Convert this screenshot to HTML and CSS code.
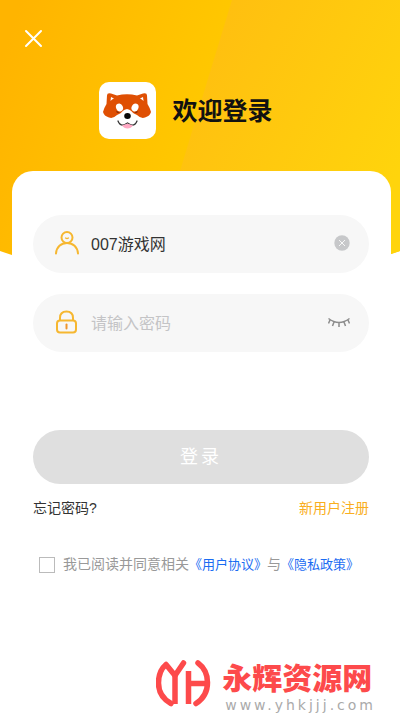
FILE: index.html
```html
<!DOCTYPE html>
<html lang="zh-CN">
<head>
<meta charset="utf-8">
<meta name="viewport" content="width=device-width, initial-scale=1">
<title>欢迎登录</title>
<link rel="stylesheet" href="styles.css">
</head>
<body>
<div class="page">
  <svg class="backdrop" viewBox="0 0 400 275" preserveAspectRatio="none" aria-hidden="true">
    <defs>
      <linearGradient id="left" gradientUnits="userSpaceOnUse" x1="0" y1="60" x2="230" y2="140">
        <stop offset="0" stop-color="#ffb400"/>
        <stop offset="1" stop-color="#ffcb00"/>
      </linearGradient>
      <linearGradient id="right" gradientUnits="userSpaceOnUse" x1="195" y1="60" x2="400" y2="170">
        <stop offset="0" stop-color="#ffbf10"/>
        <stop offset="1" stop-color="#ffd40c"/>
      </linearGradient>
    </defs>
    <path fill="url(#left)" d="M0 0H400V251Q200 320 0 251Z"/>
    <path fill="url(#right)" d="M232 0H400V251Q280 292 150 273Q174 190 200 105Z"/>
  </svg>

  <header class="top">
    <button class="close" type="button" aria-label="关闭">
      <svg width="20" height="20" viewBox="0 0 20 20" fill="none" stroke="#fff" stroke-width="2" stroke-linecap="round"><path d="M2 2 17 17M17 2 2 17"/></svg>
    </button>
  </header>

  <div class="brand">
    <svg class="logo" width="57" height="57" viewBox="0 0 57 57" aria-hidden="true">
      <rect width="57" height="57" rx="10" fill="#fff"/>
      <path fill="#df4f03" d="M8 13.500Q8 10.500 12 11.500L18 13.500Q28 11 38 13.500L44 11.500Q48 10.500 48 13.500L48.500 22Q51 26 52 30Q51 34 46 35.500Q42 37 38 33L28 28L18 33Q14 37 10 35.500Q5 34 4 30Q5 26 7.500 22Z"/>
      <path fill="#fff" d="M11.500 19 12 15 15 16.500Q13 17 11.500 19ZM44.500 19 44 15 41 16.500Q43 17 44.500 19Z"/>
      <ellipse cx="20.500" cy="25.500" rx="3.400" ry="4" fill="#fff" transform="rotate(-25 20.500 25.500)"/>
      <ellipse cx="36" cy="25.500" rx="3.400" ry="4" fill="#fff" transform="rotate(25 36 25.500)"/>
      <path fill="#fff" d="M28 27Q33 28 35 33L38 38Q36 46 28 46Q20 46 18 38L21 33Q23 28 28 27Z"/>
      <path fill="#8f3208" d="M17 29Q19 29 21 31L18 31ZM39 29Q37 29 35 31L38 31Z"/>
      <ellipse cx="28.500" cy="34" rx="3.300" ry="3" fill="#080808"/>
      <path fill="none" stroke="#333" stroke-width="1.300" stroke-linecap="round" d="M19 39Q21 44 25 43L28.500 41 32 43Q36 44 38 39"/>
      <path fill="#ffa9c4" d="M23 43.500 28.500 41.500 34 43.500Q32 46.500 28.500 46.500Q25 46.500 23 43.500Z"/>
    </svg>
    <h1 class="title">欢迎登录</h1>
  </div>

  <main class="card">
    <form class="form">
      <div class="field">
        <label for="account" aria-label="账号">
          <svg width="26" height="26" viewBox="0 0 26 26" fill="none" stroke="#f6b730" stroke-width="2" stroke-linecap="round"><circle cx="13" cy="7.500" r="5.500"/><path d="M2 23.500C2.500 17 7 13 13 13S23.500 17 24 23.500"/><path stroke-width="1.300" d="M11.500 8Q13 9 14.500 8"/></svg>
        </label>
        <input class="input" id="account" type="text" value="007游戏网">
        <button class="tool" type="button" aria-label="清除">
          <svg width="22" height="16" viewBox="0 0 22 16"><circle cx="14" cy="8" r="7.700" fill="#c7c8ca"/><path d="M11 5 17 11M17 5 11 11" stroke="#f7f7f7" stroke-width="1"/></svg>
        </button>
      </div>
      <div class="field">
        <label for="password" aria-label="密码">
          <svg width="26" height="26" viewBox="0 0 26 26" fill="none" stroke="#f6b730" stroke-width="2"><rect x="3" y="11.500" width="19" height="12" rx="3"/><path d="M6 11.500V9C6 5 8.500 2.500 12.500 2.500S19 5 19 9V11.500"/><path stroke="#ef952c" stroke-linecap="round" d="M12.500 15.500V19.500"/></svg>
        </label>
        <input class="input" id="password" type="password" placeholder="请输入密码">
        <button class="tool" type="button" aria-label="显示密码">
          <svg width="22" height="16" viewBox="0 0 22 16" fill="none" stroke="#8c8c8c" stroke-width="1.500"><path d="M.5 4.500Q11 12.500 21.500 4.500M2 6 .5 9.500M6 8 4.500 12M11 9V13M16 8 17.500 12M20 6 21.500 9.500"/></svg>
        </button>
      </div>
      <button class="submit" type="submit">登录</button>
      <nav class="links">
        <a class="forgot" href="#forgot">忘记密码?</a>
        <a class="register" href="#register">新用户注册</a>
      </nav>
      <div class="terms">
        <input class="check" id="agree" type="checkbox">
        <p class="agree"><label for="agree">我已阅读并同意相关</label><a href="#terms">《用户协议》</a>与<a href="#privacy">《隐私政策》</a></p>
      </div>
    </form>
  </main>

  <footer class="site">
    <svg width="56" height="50" viewBox="0 0 56 50" fill="none" stroke="#fd4a4b" stroke-width="5.500" stroke-linejoin="round" aria-hidden="true"><path stroke-linecap="round" d="M15 45.500C7 41 2.500 34 2.500 25Q2.500 13 10 6.500L19 17.500 27.500 5"/><path d="M19 17V46M32.500 13V46M32.500 25.500H51"/><path stroke-linecap="round" d="M42 5Q51.500 12 51.500 24.500Q51.500 38 40 45.500"/></svg>
    <div class="words">
      <strong class="name">永辉资源网</strong>
      <span class="address">www.yhkjjj.com</span>
    </div>
  </footer>
</div>
</body>
</html>
```
FILE: styles.css
```css
* {
  box-sizing: border-box;
}

body {
  margin: 0;
  background: #fff;
  color: #333;
  font-family: "Liberation Sans", "Noto Sans CJK SC", sans-serif;
  font-size: 14px;
  line-height: 20px;
}

button {
  padding: 0;
  border: 0;
  background: none;
  font: inherit;
  cursor: pointer;
}

svg {
  display: block;
}

a {
  text-decoration: none;
}

.page {
  position: relative;
  display: flex;
  flex-direction: column;
  min-height: 100vh;
}

.backdrop {
  position: absolute;
  z-index: -1;
  top: 0;
  left: 0;
  width: 100%;
  height: 275px;
}

.top {
  padding: 29px 24px 0;
}

.brand {
  display: flex;
  align-items: center;
  justify-content: center;
  gap: 16px;
  margin-top: 28px;
  padding-right: 28px;
}

.title {
  margin: 0;
  color: #111;
  font-size: 25px;
  font-weight: 700;
  line-height: 36px;
}

.card {
  margin: 32px 9px 0 12px;
  padding: 44px 22px 0 21px;
  border-radius: 21px 21px 0 0;
  background: #fff;
}

.form {
  display: flex;
  flex-direction: column;
}

.field {
  display: flex;
  align-items: center;
  height: 58px;
  margin-bottom: 21px;
  padding: 0 19px 2px 21px;
  border-radius: 29px;
  background: #f7f7f7;
}

.input {
  flex: 1;
  min-width: 0;
  margin-left: 11px;
  padding: 4px 0 0;
  border: 0;
  outline: 0;
  background: none;
  color: #333;
  font: inherit;
  font-size: 16px;
  line-height: 24px;
}

.input::placeholder {
  color: #c4c4c6;
  opacity: 1;
}

.submit {
  height: 54px;
  margin-top: 57px;
  border-radius: 27px;
  background: #dfdfdf;
  color: #fff;
  font-size: 18px;
  letter-spacing: 3px;
}

.links {
  display: flex;
  justify-content: space-between;
  margin-top: 14px;
}

.forgot {
  color: #333;
}

.register {
  color: #f9ae20;
}

.terms {
  display: flex;
  align-items: center;
  gap: 8px;
  margin-top: 36px;
  padding-left: 6px;
}

.check {
  flex: none;
  width: 16px;
  height: 16px;
  margin: 0;
  border: 1px solid #bbb;
  background: #fff;
  appearance: none;
}

.check:checked {
  background: #f6b730;
}

.agree {
  margin: 0;
  color: #999;
  white-space: nowrap;
}

.agree a {
  color: #1b6cf2;
  font-size: 13px;
}

.site {
  display: flex;
  align-items: flex-start;
  gap: 10px;
  align-self: flex-end;
  margin-top: auto;
  padding: 24px 24px 6px 0;
}

.words {
  display: flex;
  flex-direction: column;
}

.name {
  padding-top: 2px;
  color: #fd4a4b;
  font-size: 30px;
  font-weight: 900;
  line-height: 38px;
}

.address {
  padding-left: 3px;
  color: #aaa;
  font-family: "DejaVu Sans", sans-serif;
  font-size: 14px;
  line-height: 14px;
  letter-spacing: 3px;
}
```
